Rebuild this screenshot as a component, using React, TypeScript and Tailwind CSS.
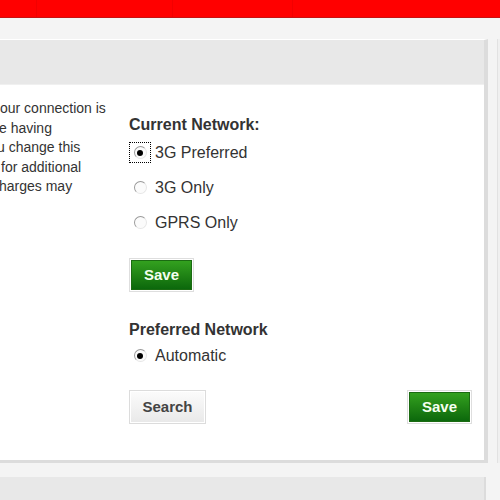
import React from "react";

function Radio({ checked }: { checked?: boolean }) {
  return (
    <span className="relative inline-flex h-[13px] w-[13px] items-center justify-center rounded-full border border-t-[#9a9a9a] border-l-[#9a9a9a] border-b-[#e6e6e6] border-r-[#e6e6e6] bg-[#fbfbfb]">
      {checked && <span className="h-[6px] w-[6px] rounded-full bg-black" />}
    </span>
  );
}

function GreenButton({ label }: { label: string }) {
  return (
    <div className="inline-flex border border-[#dedede] bg-white p-px">
      <button className="flex h-[30px] w-[61px] items-center justify-center border border-[#1b6b12] bg-gradient-to-b from-[#33a11f] to-[#0b680c] text-[15px] font-bold text-[#f4fff0]">
        {label}
      </button>
    </div>
  );
}

export default function App() {
  return (
    <div
      className="h-[500px] w-[500px] overflow-hidden bg-[#f4f4f4]"
      style={{ fontFamily: '"Liberation Sans", Arial, sans-serif' }}
    >
      {/* top red bar */}
      <div className="flex h-[18px] border-b border-[#c71212] bg-[#ff0000]">
        <div className="w-[37px] border-r border-[#f20000]" />
        <div className="w-[136px] border-r border-[#f20000]" />
        <div className="w-[120px] border-r border-[#f20000]" />
        <div className="flex-1" />
      </div>

      <div className="flex items-start pt-[21px]">
        {/* main panel */}
        <div className="w-[488px] border-r-4 border-b-[3px] border-r-[#dcdcdc] border-b-[#dcdcdc] border-t border-t-white">
          <div className="h-[45px] border-b border-[#f0f0f0] bg-[#e8e8e8]" />
          <div className="flex h-[375px] bg-white">
            {/* left text */}
            <div className="w-[129px] pt-[14px] text-[14px] leading-[19.5px] text-[#333]">
              <div className="whitespace-nowrap">our connection is</div>
              <div className="ml-[-1px] whitespace-nowrap">e having</div>
              <div className="ml-[-3px] whitespace-nowrap">u change this</div>
              <div className="ml-[1px] whitespace-nowrap">for additional</div>
              <div className="ml-[-1px] whitespace-nowrap">harges may</div>
            </div>
            {/* right form */}
            <div className="flex-1 pt-[30px] pr-[12px] text-[#333]">
              <div className="text-[16px] font-bold leading-[19px] text-[#333]">Current Network:</div>
              <div className="mt-[8px] flex flex-col gap-[14px] text-[16px] leading-[19px]">
                <div className="flex items-center">
                  <span className="flex h-[21px] w-[22px] items-center justify-center border border-dotted border-black">
                    <Radio checked />
                  </span>
                  <span className="ml-[4px]">3G Preferred</span>
                </div>
                <div className="flex items-center">
                  <span className="flex h-[21px] w-[22px] items-center justify-center">
                    <Radio />
                  </span>
                  <span className="ml-[4px]">3G Only</span>
                </div>
                <div className="flex items-center">
                  <span className="flex h-[21px] w-[22px] items-center justify-center">
                    <Radio />
                  </span>
                  <span className="ml-[4px]">GPRS Only</span>
                </div>
              </div>
              <div className="mt-[25px]">
                <GreenButton label="Save" />
              </div>
              <div className="mt-[28px] text-[16px] font-bold leading-[19px]">Preferred Network</div>
              <div className="mt-[6px] flex items-center text-[16px] leading-[19px]">
                <span className="flex h-[21px] w-[22px] items-center justify-center">
                  <Radio checked />
                </span>
                <span className="ml-[4px]">Automatic</span>
              </div>
              <div className="mt-[24px] flex items-start justify-between">
                <div className="inline-flex border border-[#dcdcdc] p-px">
                  <button className="flex h-[30px] w-[73px] items-center justify-center bg-gradient-to-b from-[#fbfbfb] to-[#e9e9e9] text-[15px] font-bold text-[#444]">
                    Search
                  </button>
                </div>
                <GreenButton label="Save" />
              </div>
            </div>
          </div>
        </div>
        {/* right neighbour panel edge */}
        <div className="ml-[9px] h-[424px] flex-1 border-l border-[#e2e2e2] bg-[#f0f0f0]" />
      </div>

      {/* next panel */}
      <div className="mt-[14px] h-[30px] w-[486px] border-r-2 border-[#dcdcdc] bg-[#e8e8e8]" />
    </div>
  );
}
